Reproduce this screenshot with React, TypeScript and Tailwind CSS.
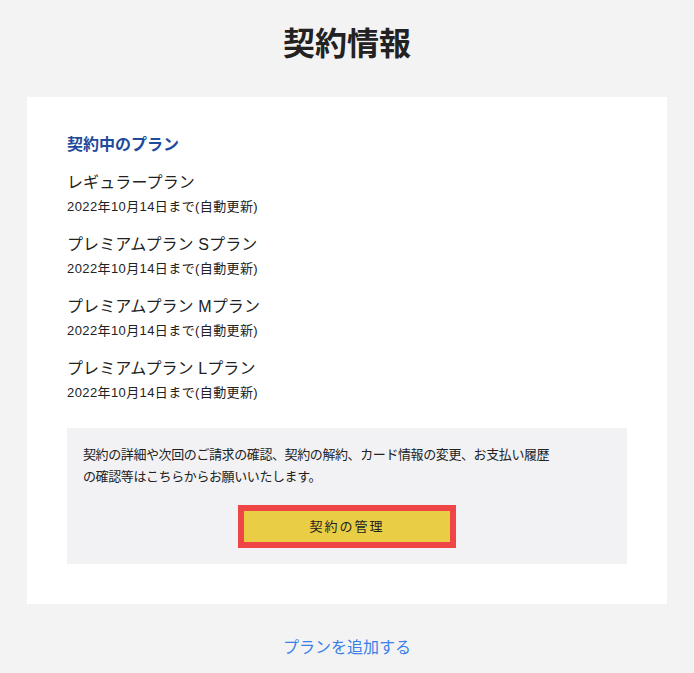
import React from 'react';

const plans = [
  'レギュラープラン',
  'プレミアムプラン Sプラン',
  'プレミアムプラン Mプラン',
  'プレミアムプラン Lプラン',
];

const App: React.FC = () => {
  return (
    <div className="min-h-screen bg-[#f3f3f3] font-['Liberation_Sans','Noto_Sans_CJK_JP',sans-serif] text-[#222]">
      <div className="mx-auto w-[640px] pt-[20px]">
        <h1 className="text-center text-[32px] font-bold leading-[48px] text-[#222]">契約情報</h1>
        <div className="mt-[29px] bg-white px-[40px] pt-[36px] pb-[40px]">
          <h2 className="text-[16px] font-bold leading-[24px] text-[#1e4b9b]">契約中のプラン</h2>
          <div className="mt-[14px] flex flex-col gap-[14px]">
            {plans.map((p) => (
              <div key={p}>
                <p className="text-[16px] leading-[24px] tracking-[0.1px] text-[#222]">{p}</p>
                <p className="text-[13px] leading-[24px] tracking-[0.4px] text-[#222]">2022年10月14日まで(自動更新)</p>
              </div>
            ))}
          </div>
          <div className="mt-[23px] bg-[#f2f2f4] px-[16px] pt-[16px] pb-[16px]">
            <p className="w-[470px] text-[13px] leading-[22px] tracking-[-0.4px] text-[#222]">
              契約の詳細や次回のご請求の確認、契約の解約、カード情報の変更、お支払い履歴の確認等はこちらからお願いいたします。
            </p>
            <div className="mt-[17px] flex justify-center">
              <button className="h-[43px] w-[218px] border-[6px] border-[#f04545] bg-[#e8cd45] text-[13px] tracking-[0.15em] text-[#222]">
                契約の管理
              </button>
            </div>
          </div>
        </div>
        <div className="mt-[32px] text-center">
          <a href="#" className="text-[16px] leading-[24px] text-[#3b7fe8]">プランを追加する</a>
        </div>
      </div>
    </div>
  );
};

export default App;
